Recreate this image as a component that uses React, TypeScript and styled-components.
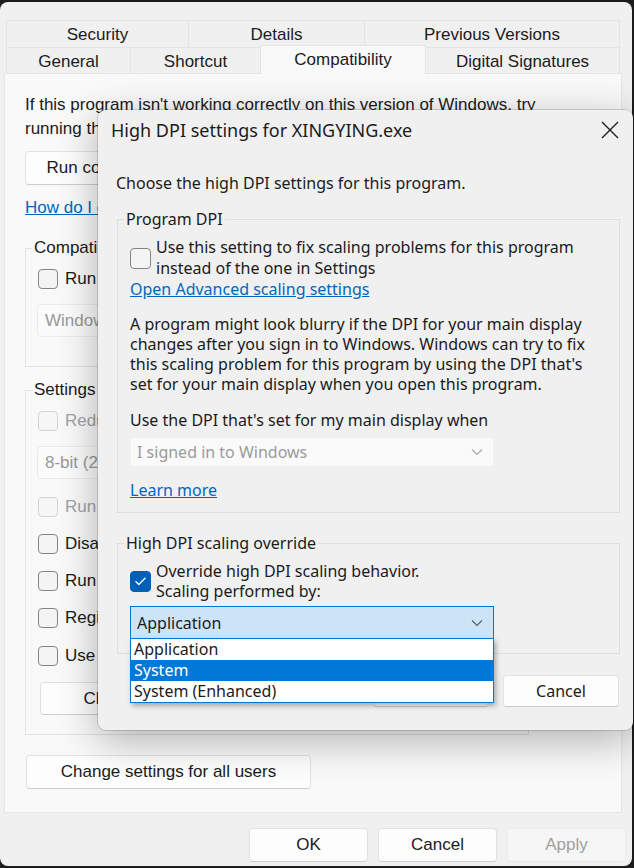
import styled, { createGlobalStyle } from 'styled-components';

const GlobalStyle = createGlobalStyle`
  html, body {
    margin: 0;
    padding: 0;
    background: #1c1c1c;
  }
  body {
    width: 634px;
    height: 868px;
    overflow: hidden;
  }
`;

const SANS = `"Liberation Sans", Arial, sans-serif`;
const SEGOE = `"Noto Sans", "Open Sans", sans-serif`;

const Screen = styled.div`
  position: relative;
  width: 634px;
  height: 868px;
`;

/* ---------- properties sheet ---------- */

const Window = styled.div`
  box-sizing: border-box;
  display: flex;
  flex-direction: column;
  width: 632px;
  height: 864px;
  margin-top: 2px;
  padding: 18px 10px 0 4px;
  background: #f0f0f0;
  border-radius: 8px;
  font-family: ${SANS};
  font-size: 17px;
  color: #1b1b1b;
`;

const TabRow = styled.div<{ $height: number }>`
  display: flex;
  height: ${p => p.$height}px;
  padding: 0 3px 0 3px;
`;

const Tab = styled.div<{ $width: number; $active?: boolean }>`
  box-sizing: border-box;
  position: relative;
  flex: 0 0 ${p => p.$width}px;
  display: flex;
  align-items: center;
  justify-content: center;
  margin-left: -1px;
  padding-top: 2px;
  border: 1px solid #e4e4e4;
  border-bottom: none;
  background: ${p => (p.$active ? '#f9f9f9' : '#f0f0f0')};
  ${p =>
    p.$active &&
    `
    z-index: 1;
    margin-top: -2px;
    height: calc(100% + 3px);
    padding: 0 0 1px;
  `}
`;

const Panel = styled.div`
  box-sizing: border-box;
  height: 740px;
  padding: 19px 20px 0 20px;
  background: #f9f9f9;
  border: 1px solid #e5e5e5;
  overflow: hidden;
`;

const Intro = styled.p`
  margin: 0;
  line-height: 24px;
  white-space: nowrap;
`;

const Button = styled.button<{ $width?: number; $disabled?: boolean }>`
  box-sizing: border-box;
  display: flex;
  align-items: center;
  justify-content: center;
  width: ${p => (p.$width ? `${p.$width}px` : 'auto')};
  height: 34px;
  padding: 0;
  font-family: ${SANS};
  font-size: 17px;
  color: ${p => (p.$disabled ? '#a0a0a0' : '#1b1b1b')};
  white-space: nowrap;
  background: ${p => (p.$disabled ? '#f6f6f6' : '#fdfdfd')};
  border: 1px solid ${p => (p.$disabled ? '#ececec' : '#e1e1e1')};
  border-bottom-color: ${p => (p.$disabled ? '#e6e6e6' : '#cdcdcd')};
  border-radius: 4px;
`;

const Link = styled.a`
  display: block;
  line-height: 24px;
  color: #0067c0;
  text-decoration: underline;
  white-space: nowrap;
`;

const Group = styled.fieldset<{ $bottom: number }>`
  box-sizing: border-box;
  width: 504px;
  margin: 0;
  padding: 0 12px ${p => p.$bottom}px;
  border: 1px solid #e2e2e2;
`;

const GroupTitle = styled.legend`
  margin-left: -6px;
  padding: 0 2px;
  line-height: 24px;
`;

const Stack = styled.div<{ $top: number; $left?: number }>`
  margin-top: ${p => p.$top}px;
  margin-left: ${p => p.$left ?? 0}px;
`;

const Box = styled.span<{ $checked?: boolean; $disabled?: boolean; $size: number }>`
  box-sizing: border-box;
  flex: 0 0 ${p => p.$size}px;
  display: flex;
  align-items: center;
  justify-content: center;
  width: ${p => p.$size}px;
  height: ${p => p.$size}px;
  border-radius: 4px;
  border: 1px solid
    ${p => (p.$checked ? '#005fb8' : p.$disabled ? '#d4d4d4' : '#858585')};
  background: ${p => (p.$checked ? '#005fb8' : p.$disabled ? '#f7f7f7' : '#f4f4f4')};
`;

const CheckRow = styled.label<{ $top: number; $disabled?: boolean }>`
  display: flex;
  align-items: center;
  gap: 7px;
  height: 24px;
  margin-top: ${p => p.$top}px;
  color: ${p => (p.$disabled ? '#a3a3a3' : 'inherit')};
  white-space: nowrap;
`;

const Combo = styled.div<{ $top: number }>`
  box-sizing: border-box;
  display: flex;
  align-items: center;
  width: 260px;
  height: 33px;
  margin: ${p => p.$top}px 0 0 -1px;
  padding-left: 7px;
  background: #fbfbfb;
  border: 1px solid #ececec;
  border-radius: 4px;
  color: #999;
  white-space: nowrap;
`;

const Footer = styled.div`
  display: flex;
  justify-content: flex-end;
  gap: 10px;
  margin: 15px -4px 0 0;
`;

/* ---------- High DPI dialog ---------- */

const Dialog = styled.div`
  position: absolute;
  left: 98px;
  top: 108px;
  box-sizing: border-box;
  display: flex;
  flex-direction: column;
  width: 535px;
  height: 620px;
  background: #f0f0f0;
  border-radius: 8px;
  box-shadow: 0 0 0 1px rgba(0, 0, 0, 0.14), 0 10px 40px rgba(0, 0, 0, 0.3);
  font-family: ${SEGOE};
  font-size: 16px;
  color: #1b1b1b;
`;

const TitleBar = styled.div`
  display: flex;
  align-items: center;
  justify-content: space-between;
  height: 40px;
  padding: 0 14px 0 13px;
  font-size: 18px;
`;

const DialogBody = styled.div`
  display: flex;
  flex-direction: column;
  padding: 0 13px 0 19px;
`;

const Lead = styled.div`
  margin: 23px 0 0 -1px;
  line-height: 20px;
`;

const Section = styled.fieldset<{ $top: number; $bottom: number }>`
  box-sizing: border-box;
  margin: ${p => p.$top}px 0 0 0;
  padding: 0 12px ${p => p.$bottom}px;
  border: 1px solid #dedede;
  min-width: 0;
`;

const SectionTitle = styled.legend`
  margin-left: -6px;
  padding: 0 2px;
  line-height: 20px;
`;

const OptionRow = styled.label<{ $top: number }>`
  display: flex;
  align-items: center;
  gap: 5px;
  margin-top: ${p => p.$top}px;
`;

const OptionText = styled.span<{ $lh: number }>`
  line-height: ${p => p.$lh}px;
  white-space: nowrap;
`;

const DialogLink = styled.a`
  display: block;
  align-self: flex-start;
  line-height: 20px;
  color: #0067c0;
  text-decoration: underline;
  white-space: nowrap;
`;

const Text = styled.div<{ $top: number }>`
  margin-top: ${p => p.$top}px;
  line-height: 20px;
  white-space: nowrap;
`;

const Select = styled.div<{ $top: number; $open?: boolean; $height: number }>`
  position: relative;
  box-sizing: border-box;
  display: flex;
  align-items: center;
  justify-content: space-between;
  width: 364px;
  height: ${p => p.$height}px;
  margin-top: ${p => p.$top}px;
  padding: 0 10px 0 6px;
  background: ${p => (p.$open ? '#cce4f7' : '#fafafa')};
  border: 1px solid ${p => (p.$open ? '#0078d7' : '#f0f0f0')};
  color: ${p => (p.$open ? '#1b1b1b' : '#9b9b9b')};
  white-space: nowrap;
`;

const DropList = styled.ul`
  position: absolute;
  left: -1px;
  top: 100%;
  box-sizing: border-box;
  width: 364px;
  margin: 0;
  padding: 0;
  list-style: none;
  background: #fff;
  border: 1px solid #0078d7;
  box-shadow: 2px 3px 5px rgba(0, 0, 0, 0.3);
  z-index: 2;
`;

const DropItem = styled.li<{ $selected?: boolean }>`
  height: 21px;
  line-height: 20px;
  padding-left: 3px;
  background: ${p => (p.$selected ? '#0078d7' : 'transparent')};
  color: ${p => (p.$selected ? '#fff' : '#1b1b1b')};
`;

const DialogActions = styled.div`
  display: flex;
  justify-content: flex-end;
  gap: 14px;
  margin: 21px 1px 0 0;
`;

const DialogButton = styled.button`
  box-sizing: border-box;
  width: 116px;
  height: 32px;
  font-family: ${SEGOE};
  font-size: 16px;
  color: #1b1b1b;
  background: #fdfdfd;
  border: 1px solid #e3e3e3;
  border-bottom-color: #cccccc;
  border-radius: 4px;
`;

function Chevron({ color }: { color: string }) {
  return (
    <svg width="12" height="8" viewBox="0 0 12 8">
      <path d="M1 1.5l5 5 5-5" fill="none" stroke={color} strokeWidth="1.1" />
    </svg>
  );
}

function CloseGlyph() {
  return (
    <svg width="18" height="18" viewBox="0 0 18 18">
      <path d="M1 1l16 16M17 1L1 17" stroke="#1b1b1b" strokeWidth="1.3" />
    </svg>
  );
}

function Tick() {
  return (
    <svg width="13" height="10" viewBox="0 0 13 10">
      <path d="M1.5 5.2l3.3 3.3L11.5 1.8" fill="none" stroke="#fff" strokeWidth="1.3" />
    </svg>
  );
}

const settingsOptions = [
  { label: 'Run in 640 x 480 screen resolution', top: 16, disabled: true },
  { label: 'Disable fullscreen optimizations', top: 13 },
  { label: 'Run this program as an administrator', top: 13 },
  { label: 'Register this program for restart', top: 13 },
  { label: 'Use legacy display ICC color management', top: 14 },
];

export default function App() {
  return (
    <Screen>
      <GlobalStyle />
      <Window>
        <TabRow $height={27}>
          <Tab $width={183}>Security</Tab>
          <Tab $width={177}>Details</Tab>
          <Tab $width={256}>Previous Versions</Tab>
        </TabRow>
        <TabRow $height={26}>
          <Tab $width={125}>General</Tab>
          <Tab $width={131}>Shortcut</Tab>
          <Tab $width={166} $active>
            Compatibility
          </Tab>
          <Tab $width={195}>Digital Signatures</Tab>
        </TabRow>

        <Panel>
          <Intro>
            If this program isn't working correctly on this version of Windows, try
            <br />
            running the compatibility troubleshooter.
          </Intro>
          <Stack $top={10}>
            <Button $width={286}>Run compatibility troubleshooter</Button>
          </Stack>
          <Stack $top={11}>
            <Link>How do I choose compatibility settings manually?</Link>
          </Stack>

          <Stack $top={16}>
            <Group $bottom={29}>
              <GroupTitle>Compatibility mode</GroupTitle>
              <CheckRow $top={7}>
                <Box $size={20} />
                Run this program in compatibility mode for:
              </CheckRow>
              <Combo $top={13}>Windows 8</Combo>
            </Group>
          </Stack>

          <Stack $top={11}>
            <Group $bottom={19}>
              <GroupTitle>Settings</GroupTitle>
              <CheckRow $top={7} $disabled>
                <Box $size={20} $disabled />
                Reduced color mode
              </CheckRow>
              <Combo $top={13}>8-bit (256) color</Combo>
              {settingsOptions.map(o => (
                <CheckRow key={o.label} $top={o.top} $disabled={o.disabled}>
                  <Box $size={20} $disabled={o.disabled} />
                  {o.label}
                </CheckRow>
              ))}
              <Stack $top={14} $left={2}>
                <Button $width={280} style={{ height: 33 }}>
                  Change high DPI settings
                </Button>
              </Stack>
            </Group>
          </Stack>

          <Stack $top={20} $left={1}>
            <Button $width={285}>Change settings for all users</Button>
          </Stack>
        </Panel>

        <Footer>
          <Button $width={119}>OK</Button>
          <Button $width={119}>Cancel</Button>
          <Button $width={119} $disabled>
            Apply
          </Button>
        </Footer>
      </Window>

      <Dialog>
        <TitleBar>
          <span>High DPI settings for XINGYING.exe</span>
          <CloseGlyph />
        </TitleBar>
        <DialogBody>
          <Lead>Choose the high DPI settings for this program.</Lead>

          <Section $top={16} $bottom={12}>
            <SectionTitle>Program DPI</SectionTitle>
            <OptionRow $top={8}>
              <Box $size={21} />
              <OptionText $lh={21}>
                Use this setting to fix scaling problems for this program
                <br />
                instead of the one in Settings
              </OptionText>
            </OptionRow>
            <DialogLink>Open Advanced scaling settings</DialogLink>
            <Text $top={15}>
              A program might look blurry if the DPI for your main display
              <br />
              changes after you sign in to Windows. Windows can try to fix
              <br />
              this scaling problem for this program by using the DPI that's
              <br />
              set for your main display when you open this program.
            </Text>
            <Text $top={16}>Use the DPI that's set for my main display when</Text>
            <Select $top={7} $height={30}>
              I signed in to Windows
              <Chevron color="#a6a6a6" />
            </Select>
            <Text $top={13}>
              <DialogLink as="span">Learn more</DialogLink>
            </Text>
          </Section>

          <Section $top={20} $bottom={14}>
            <SectionTitle>High DPI scaling override</SectionTitle>
            <OptionRow $top={8}>
              <Box $size={21} $checked>
                <Tick />
              </Box>
              <OptionText $lh={20}>
                Override high DPI scaling behavior.
                <br />
                Scaling performed by:
              </OptionText>
            </OptionRow>
            <Select $top={5} $height={33} $open>
              Application
              <Chevron color="#5a5a5a" />
              <DropList>
                <DropItem>Application</DropItem>
                <DropItem $selected>System</DropItem>
                <DropItem>System (Enhanced)</DropItem>
              </DropList>
            </Select>
          </Section>

          <DialogActions>
            <DialogButton>OK</DialogButton>
            <DialogButton>Cancel</DialogButton>
          </DialogActions>
        </DialogBody>
      </Dialog>
    </Screen>
  );
}
